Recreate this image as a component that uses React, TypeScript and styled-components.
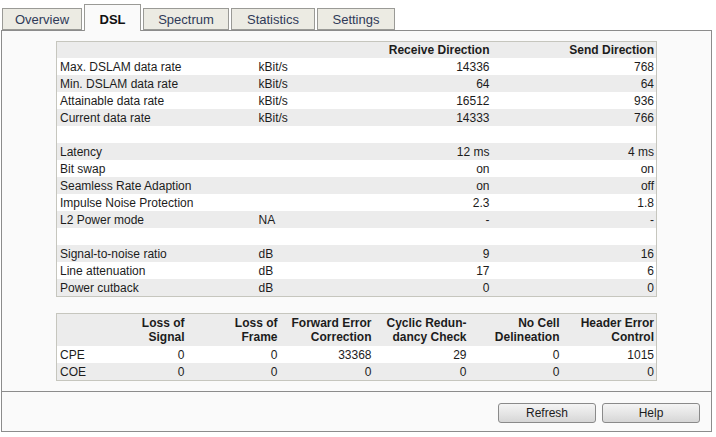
import React from 'react';
import styled, { createGlobalStyle } from 'styled-components';

const GlobalStyle = createGlobalStyle`
  html, body {
    margin: 0;
    padding: 0;
    background: #ffffff;
  }
  body {
    font-family: 'Liberation Sans', Arial, sans-serif;
    font-size: 12px;
    color: #1c1c1c;
  }
`;

const Page = styled.div`
  width: 716px;
  height: 437px;
  padding: 0 0 0 1px;
  box-sizing: border-box;
`;

const TabBar = styled.div`
  display: flex;
  align-items: flex-end;
  gap: 2px;
  height: 30px;
  padding-left: 1px;
  position: relative;
  z-index: 1;
`;

const Tab = styled.div<{ $active?: boolean; $width: number }>`
  width: ${p => p.$width}px;
  box-sizing: border-box;
  height: ${p => (p.$active ? 27 : 22)}px;
  margin-bottom: ${p => (p.$active ? -1 : 0)}px;
  display: flex;
  align-items: center;
  justify-content: center;
  padding-top: ${p => (p.$active ? 2 : 0)}px;
  border: 1px solid #9a9a96;
  border-bottom: ${p => (p.$active ? 'none' : '1px solid #9a9a96')};
  background: ${p => (p.$active ? '#fafafa' : '#ecebe3')};
  color: ${p => (p.$active ? '#111111' : '#2f3a58')};
  font-size: 13px;
  font-weight: ${p => (p.$active ? 'bold' : 'normal')};
  cursor: pointer;
`;

const Panel = styled.div`
  width: 711px;
  height: 402px;
  box-sizing: border-box;
  border: 1px solid #8c8c8c;
  background: #fafafa;
  display: flex;
  flex-direction: column;
`;

const Content = styled.div`
  flex: 1;
  padding: 10px 0 0 54px;
  display: flex;
  flex-direction: column;
  gap: 16px;
`;

const Table = styled.table`
  width: 600px;
  border-collapse: collapse;
  border: 1px solid #c6c6be;
  table-layout: fixed;
  font-size: 12px;
`;

const Row = styled.tr<{ $odd: boolean }>`
  background: ${p => (p.$odd ? '#ececec' : '#ffffff')};
`;

const Cell = styled.td<{ $right?: boolean }>`
  height: 17px;
  padding: 0 2px 0 3px;
  text-align: ${p => (p.$right ? 'right' : 'left')};
  white-space: nowrap;
  line-height: 14px;
`;

const HeadCell = styled.th<{ $tall?: boolean }>`
  height: ${p => (p.$tall ? 32 : 16)}px;
  padding: 0 2px 0 3px;
  text-align: right;
  font-weight: bold;
  line-height: 14px;
  white-space: nowrap;
`;

const Footer = styled.div`
  height: 40px;
  box-sizing: border-box;
  border-top: 1px solid #8c8c8c;
  display: flex;
  align-items: flex-start;
  justify-content: flex-end;
  gap: 6px;
  padding: 11px 11px 0 0;
`;

const Button = styled.button`
  width: 98px;
  height: 20px;
  border: 1px solid #8a8a8a;
  border-radius: 3px;
  background: linear-gradient(#f4f4f4, #e6e6e6 50%, #d6d6d6);
  font-family: 'Liberation Sans', Arial, sans-serif;
  font-size: 12px;
  color: #1c1c1c;
  padding: 0;
  cursor: pointer;
`;

const tabs = [
  { label: 'Overview', width: 80 },
  { label: 'DSL', width: 57, active: true },
  { label: 'Spectrum', width: 86 },
  { label: 'Statistics', width: 84 },
  { label: 'Settings', width: 78 },
];

type Line = [string, string, string, string] | null;

const lines: Line[] = [
  ['Max. DSLAM data rate', 'kBit/s', '14336', '768'],
  ['Min. DSLAM data rate', 'kBit/s', '64', '64'],
  ['Attainable data rate', 'kBit/s', '16512', '936'],
  ['Current data rate', 'kBit/s', '14333', '766'],
  null,
  ['Latency', '', '12 ms', '4 ms'],
  ['Bit swap', '', 'on', 'on'],
  ['Seamless Rate Adaption', '', 'on', 'off'],
  ['Impulse Noise Protection', '', '2.3', '1.8'],
  ['L2 Power mode', 'NA', '-', '-'],
  null,
  ['Signal-to-noise ratio', 'dB', '9', '16'],
  ['Line attenuation', 'dB', '17', '6'],
  ['Power cutback', 'dB', '0', '0'],
];

const errorHeads: React.ReactNode[] = [
  <>Loss of<br />Signal</>,
  <>Loss of<br />Frame</>,
  <>Forward Error<br />Correction</>,
  <>Cyclic Redun-<br />dancy Check</>,
  <>No Cell<br />Delineation</>,
  <>Header Error<br />Control</>,
];

const errors = [
  { name: 'CPE', values: ['0', '0', '33368', '29', '0', '1015'] },
  { name: 'COE', values: ['0', '0', '0', '0', '0', '0'] },
];

export default function App() {
  return (
    <Page>
      <GlobalStyle />
      <TabBar>
        {tabs.map(t => (
          <Tab key={t.label} $active={t.active} $width={t.width}>
            {t.label}
          </Tab>
        ))}
      </TabBar>
      <Panel>
        <Content>
          <Table>
            <colgroup>
              <col style={{ width: 199 }} />
              <col style={{ width: 100 }} />
              <col style={{ width: 136 }} />
              <col style={{ width: 165 }} />
            </colgroup>
            <thead>
              <Row $odd>
                <HeadCell />
                <HeadCell />
                <HeadCell>Receive Direction</HeadCell>
                <HeadCell>Send Direction</HeadCell>
              </Row>
            </thead>
            <tbody>
              {lines.map((l, i) => (
                <Row key={i} $odd={i % 2 === 1}>
                  {l ? (
                    <>
                      <Cell>{l[0]}</Cell>
                      <Cell>{l[1]}</Cell>
                      <Cell $right>{l[2]}</Cell>
                      <Cell $right>{l[3]}</Cell>
                    </>
                  ) : (
                    <Cell colSpan={4} />
                  )}
                </Row>
              ))}
            </tbody>
          </Table>

          <Table>
            <colgroup>
              <col style={{ width: 36 }} />
              <col style={{ width: 94 }} />
              <col style={{ width: 93 }} />
              <col style={{ width: 94 }} />
              <col style={{ width: 95 }} />
              <col style={{ width: 93 }} />
              <col style={{ width: 95 }} />
            </colgroup>
            <thead>
              <Row $odd>
                <HeadCell $tall />
                {errorHeads.map((h, i) => (
                  <HeadCell key={i} $tall>
                    {h}
                  </HeadCell>
                ))}
              </Row>
            </thead>
            <tbody>
              {errors.map((e, i) => (
                <Row key={e.name} $odd={i % 2 === 1}>
                  <Cell>{e.name}</Cell>
                  {e.values.map((v, j) => (
                    <Cell key={j} $right>
                      {v}
                    </Cell>
                  ))}
                </Row>
              ))}
            </tbody>
          </Table>
        </Content>
        <Footer>
          <Button>Refresh</Button>
          <Button>Help</Button>
        </Footer>
      </Panel>
    </Page>
  );
}
